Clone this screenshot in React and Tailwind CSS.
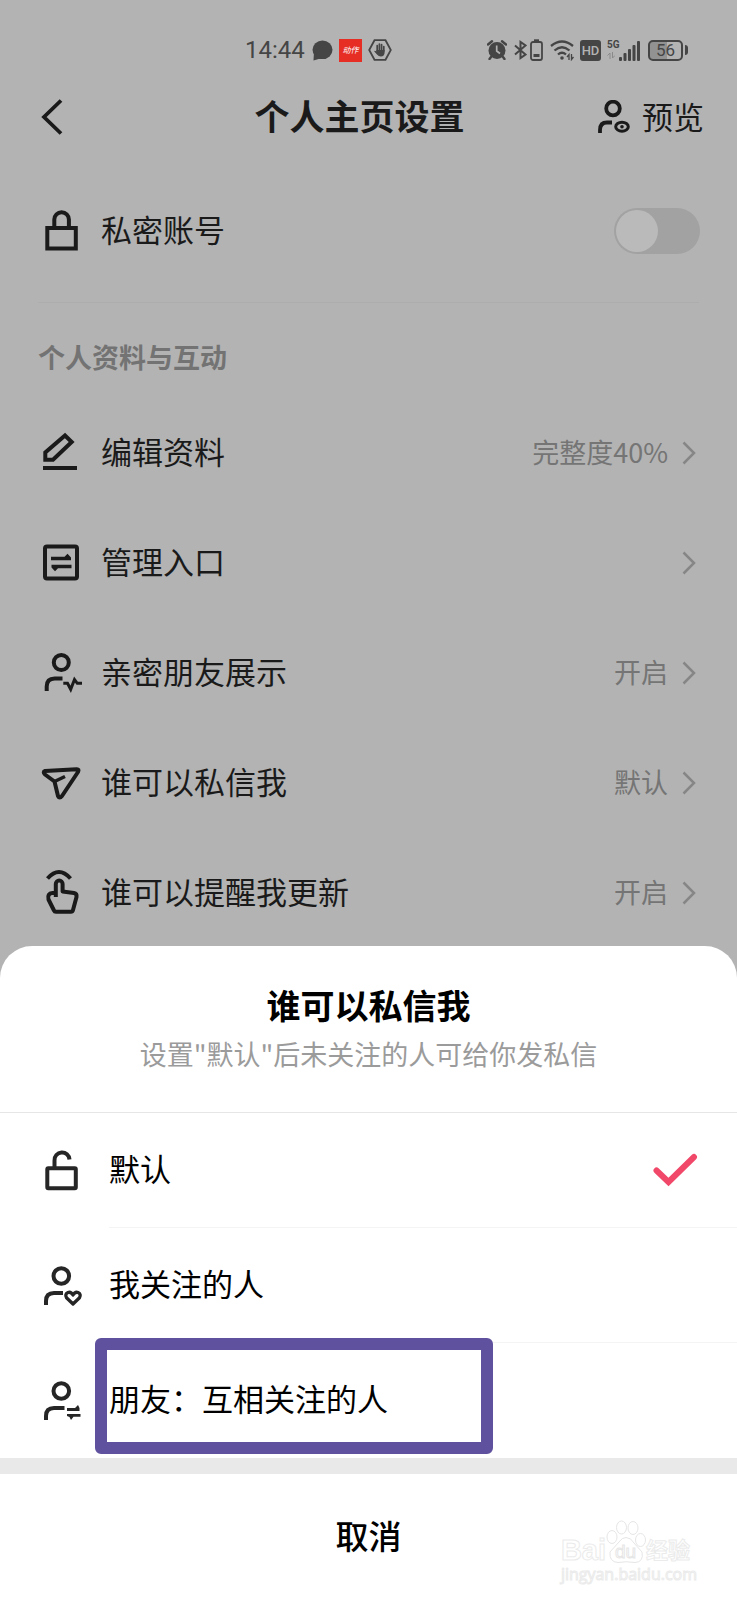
import { useState } from 'react';

function Icon({ children }) {
    return (
        <svg
            viewBox="0 0 40 40"
            className="h-10 w-10 shrink-0 overflow-visible"
            fill="none"
            stroke="currentColor"
            strokeWidth="4"
            aria-hidden="true"
        >
            {children}
        </svg>
    );
}

function LockIcon() {
    return (
        <Icon>
            <rect x="6.3" y="17" width="28.5" height="20.5" />
            <path d="M13.3 17V8.5a7.3 7.3 0 0 1 14.6 0V17" />
        </Icon>
    );
}

function UnlockIcon() {
    return (
        <Icon>
            <rect x="6.3" y="17.3" width="28.5" height="20" rx="1" />
            <path d="M13.5 17v-7.500a7.500 7.500 0 0 1 15-1" />
        </Icon>
    );
}

function EditIcon() {
    return (
        <Icon>
            <path d="M4.300 26.700V19.500L24 2.500L30.700 9L12 26.700Z" />
            <path d="M2 35H36" />
        </Icon>
    );
}

function ManageIcon() {
    return (
        <Icon>
            <rect x="4" y="3.500" width="32" height="32" rx="2" />
            <path d="M10 13.700H23.500L26.500 10.800L30 14.500V17.300H10Z" fill="currentColor" stroke="none" />
            <path d="M30.500 25.200H17L14 28.200L10.500 24.500V21.700H30.500Z" fill="currentColor" stroke="none" />
        </Icon>
    );
}

function FriendIcon() {
    return (
        <Icon>
            <circle cx="20.300" cy="9.500" r="7.500" />
            <path d="M5.700 38V33.500Q5.700 25.500 13.700 25.500H21.500" />
            <path d="M22.300 30.300H26.500L29.700 36.300L33.500 26.500L36.300 30.300H41" strokeWidth="3" />
        </Icon>
    );
}

function SendIcon() {
    return (
        <Icon>
            <path
                d="M4 8L35.500 6.200Q38.500 6 37 9L21 33Q18.500 36 17 33L13.500 18.500L4 11.500Q1.500 8.800 4 8Z"
                strokeLinejoin="round"
            />
            <path d="M13.500 18.500L24 13.500" strokeWidth="3.500" />
        </Icon>
    );
}

function TapIcon() {
    return (
        <Icon>
            <path d="M6.500 5.500Q18 -7.500 29.500 5.500" />
            <path
                d="M14.800 24V11a3.400 3.400 0 0 1 6.800 0V18.500L33 20Q36 20.500 35.500 24L32 37Q31.500 38.800 30 38.800H15Q13.500 38.800 13 37.500L7.500 26.500Q6 20.500 11.500 20H14.800"
                strokeLinejoin="round"
            />
        </Icon>
    );
}

function FollowIcon() {
    return (
        <Icon>
            <circle cx="20.300" cy="10" r="7.800" />
            <path d="M5 39V35Q5 27 13 27H22" />
            <path
                d="M32 38L25.500 31.800Q23.500 28 27 26.500Q30 25.500 32 29Q34 25.500 37 26.500Q40.500 28 38.500 31.800Z"
                strokeWidth="3.300"
                strokeLinejoin="round"
            />
        </Icon>
    );
}

function MutualIcon() {
    return (
        <Icon>
            <circle cx="20.300" cy="10" r="7.800" />
            <path d="M5 39V35Q5 27 13 27H23.500" />
            <path d="M26 27H34L37 24L38.500 27V30H26Z" fill="currentColor" stroke="none" />
            <path d="M39.500 35.800H32.500L30 39L28.500 36L26 35V33H39.500Z" fill="currentColor" stroke="none" />
        </Icon>
    );
}

function Chevron() {
    return (
        <svg viewBox="0 0 14 24" className="h-6 w-3.5 shrink-0 text-[#868686]" fill="none" stroke="currentColor" strokeWidth="2.500" aria-hidden="true">
            <path d="M1.500 1.500L12 12L1.500 22.500" />
        </svg>
    );
}

function StatusBar() {
    return (
        <div className="flex h-[100px] items-center pr-[49px] pl-[245px] text-[#454545]">
            <span className="w-[67px] font-[Roboto,sans-serif] text-2xl leading-6">14:44</span>
            <svg viewBox="0 0 21 21" className="h-[21px] w-[21px]" fill="currentColor" aria-hidden="true">
                <ellipse cx="10.500" cy="9.800" rx="10" ry="9.300" />
                <path d="M2 12L1.500 20.500L10 18Z" />
            </svg>
            <span className="ml-1.5 flex h-[23px] w-[23px] items-center justify-center bg-[#e62e25] text-[8px] leading-none text-white italic">
                动作
            </span>
            <svg viewBox="0 0 24 22" className="ml-1.5 h-[22px] w-6" fill="none" stroke="currentColor" aria-hidden="true">
                <path d="M6.500 1.200H17.500L22.800 11L17.500 20.800H6.500L1.200 11Z" strokeWidth="1.800" />
                <path d="M9.200 12V6.500M11.400 11V5M13.600 11V5.500M15.800 12V7.500" strokeWidth="1.700" strokeLinecap="round" />
                <path d="M8.400 11H16.600V14Q16 17.500 13 17.500Q10.500 17.500 9 15.500L6.300 12.500Q6.300 11 8.400 12.500Z" fill="currentColor" stroke="none" />
            </svg>

            <div className="ml-auto flex items-center">
                <svg viewBox="0 0 20 20" className="h-5 w-5" fill="none" stroke="currentColor" aria-hidden="true">
                    <circle cx="10" cy="10.500" r="8.500" fill="currentColor" stroke="none" />
                    <path d="M1 4.500L5 1.300M19 4.500L15 1.300M4 17L2.500 19M16 17L17.500 19" strokeWidth="2.400" strokeLinecap="round" />
                    <path d="M9.700 5.500V11L13 13.500" stroke="#b3b3b3" strokeWidth="1.700" />
                </svg>
                <svg viewBox="0 0 13 20" className="ml-[7px] h-5 w-[13px]" fill="none" stroke="currentColor" strokeWidth="2" aria-hidden="true">
                    <path d="M1 5.500L11.500 14.500L6.500 18V2L11.500 5.500L1 14.500" />
                </svg>
                <svg viewBox="0 0 13 22" className="ml-[3px] h-[22px] w-[13px]" fill="none" stroke="currentColor" strokeWidth="1.800" aria-hidden="true">
                    <rect x="1" y="3" width="11" height="18" rx="2" />
                    <path d="M4 1.200H9" />
                    <path d="M3.500 16.500H9.500" strokeWidth="3" />
                </svg>
                <svg viewBox="0 0 25 21" className="ml-[7px] h-[21px] w-[25px]" fill="none" stroke="currentColor" strokeWidth="2.300" aria-hidden="true">
                    <path d="M1 6Q12 -3 23 6M4.500 10.500Q12 4 19.500 10.500M8 14.500Q12 11 16 14.500" />
                    <circle cx="12" cy="18" r="1.800" fill="currentColor" stroke="none" />
                    <path d="M19 20V14.500L17 17M21.500 14V19.500L23.500 17" strokeWidth="1.300" />
                </svg>
                <span className="ml-[5px] flex h-[21px] w-[21px] items-center justify-center rounded-[3px] bg-current">
                    <span className="font-[Roboto,sans-serif] text-[13px] leading-none font-medium text-[#b3b3b3]">HD</span>
                </span>
                <div className="ml-1.5 flex h-[21px] items-end">
                    <span className="flex h-full w-3 flex-col items-start font-[Roboto,sans-serif] text-[10px] leading-[10px] font-bold">
                        5G
                        <svg viewBox="0 0 8 7" className="mt-0.5 h-[7px] w-2 text-[#8a8a8a]" fill="none" stroke="currentColor" aria-hidden="true">
                            <path d="M3 7V1L0.500 3.500M5.500 0V6L8 3.500" />
                        </svg>
                    </span>
                    <svg viewBox="0 0 22 21" className="h-[21px] w-[22px]" fill="currentColor" aria-hidden="true">
                        <rect x="0" y="17" width="3" height="4" rx="1" />
                        <rect x="4.500" y="13" width="3" height="8" rx="1" />
                        <rect x="9" y="9" width="3" height="12" rx="1" />
                        <rect x="13.500" y="5" width="3" height="16" rx="1" />
                        <rect x="18" y="1" width="3" height="20" rx="1" />
                    </svg>
                </div>
                <span className="ml-[7px] flex h-[21px] w-[35px] items-center justify-center rounded-[5px] border-2 border-current bg-linear-to-r from-[#929292] from-55% to-[#b3b3b3] to-55% font-[Roboto,sans-serif] text-[17px] leading-none">
                    56
                </span>
                <span className="ml-0.5 h-2.5 w-[3px] rounded-r-sm bg-current" />
            </div>
        </div>
    );
}

function Header() {
    return (
        <header className="flex h-[34px] items-center pr-[33px] pl-[41px]">
            <button type="button" aria-label="返回" className="w-20">
                <svg viewBox="0 0 24 36" className="h-9 w-6" fill="none" stroke="currentColor" strokeWidth="3.800" aria-hidden="true">
                    <path d="M20 1.500L3 18L20 34.500" />
                </svg>
            </button>
            <h1 className="flex-1 pb-1 text-center text-[35px] leading-[34px] font-bold">个人主页设置</h1>
            <button type="button" className="flex items-center gap-2.5 text-[31px] leading-[34px]">
                <svg viewBox="0 0 34 34" className="h-[34px] w-[34px]" fill="none" stroke="currentColor" strokeWidth="3.800" aria-hidden="true">
                    <circle cx="15" cy="8.500" r="6.800" />
                    <path d="M2 33V30Q2 22.500 9 22.500H14" />
                    <ellipse cx="24" cy="26.700" rx="6.300" ry="4.500" strokeWidth="3" />
                    <circle cx="24" cy="26.700" r="1.800" fill="currentColor" stroke="none" />
                </svg>
                <span className="pb-0.5">预览</span>
            </button>
        </header>
    );
}

const settings = [
    { icon: EditIcon, title: '编辑资料', value: '完整度40%' },
    { icon: ManageIcon, title: '管理入口' },
    { icon: FriendIcon, title: '亲密朋友展示', value: '开启' },
    { icon: SendIcon, title: '谁可以私信我', value: '默认' },
    { icon: TapIcon, title: '谁可以提醒我更新', value: '开启' },
];

function SettingRow({ icon: RowIcon, title, value }) {
    return (
        <button type="button" className="flex h-[110px] w-full items-center pr-[41px] pl-[41px] text-left">
            <RowIcon />
            <span className="ml-5 flex-1 pb-1 text-[31px] leading-10">{title}</span>
            <span className="mr-3.5 pb-0.5 text-[27px] leading-10 text-[#757575]">{value}</span>
            <Chevron />
        </button>
    );
}

const options = [
    { id: 'default', icon: UnlockIcon, title: '默认' },
    { id: 'following', icon: FollowIcon, title: '我关注的人' },
    { id: 'friends', icon: MutualIcon, title: '朋友：互相关注的人', marked: true },
];

function OptionRow({ option, checked, onSelect }) {
    const OptionIcon = option.icon;

    return (
        <label className="group relative flex h-[115px] items-stretch pl-[41px]">
            <span className="flex items-center text-[#262626]">
                <OptionIcon />
            </span>
            <input
                type="radio"
                name="message-permission"
                className="sr-only"
                checked={checked}
                onChange={() => onSelect(option.id)}
            />
            <span className="ml-7 flex flex-1 items-center border-b border-[#f4f4f4] pr-[39px] text-[31px] leading-10 group-last:border-transparent">
                <span className="flex-1 pb-1">{option.title}</span>
                {checked && (
                    <svg viewBox="0 0 46 36" className="h-9 w-[46px] text-[#f1486a]" fill="none" stroke="currentColor" strokeWidth="6" aria-hidden="true">
                        <path d="M4.500 18.500L16.500 30L42 5" strokeLinecap="round" />
                    </svg>
                )}
            </span>
            {option.marked && (
                <span className="absolute top-[-5px] left-[95px] h-[116px] w-[398px] rounded-md border-12 border-[#5f519e]" />
            )}
        </label>
    );
}

function Watermark() {
    return (
        <div className="absolute right-10 bottom-4 text-white [-webkit-text-stroke:1px_#ebebeb]" aria-hidden="true">
            <div className="flex items-end">
                <span className="font-['Liberation_Sans',sans-serif] text-[29px] leading-7 font-bold">Bai</span>
                <svg viewBox="0 0 40 44" className="h-11 w-10" fill="#fff" stroke="#e6e6e6">
                    <ellipse cx="6" cy="17" rx="5" ry="6.500" />
                    <ellipse cx="15.500" cy="7.500" rx="5" ry="6.500" />
                    <ellipse cx="27" cy="8" rx="5" ry="6.500" />
                    <ellipse cx="34.500" cy="20" rx="5" ry="6.500" />
                    <path d="M20 17.500Q25 17.500 28 23L36 32Q38 42 29 42.500Q20 41 12 42.500Q3 42 4 32L13 22Q16 17.500 20 17.500Z" />
                    <text x="9" y="38" fontFamily="Liberation Sans, sans-serif" fontSize="19">du</text>
                </svg>
                <span className="text-[22px] leading-8 font-bold">经验</span>
            </div>
            <div className="font-['Open_Sans',sans-serif] text-base leading-5">jingyan.baidu.com</div>
        </div>
    );
}

export default function App() {
    const [isPrivate, setIsPrivate] = useState(false);
    const [selected, setSelected] = useState('default');

    return (
        <div className="flex min-h-screen flex-col bg-[#b3b3b3] font-['Noto_Sans_CJK_SC',sans-serif] text-[#1a1a1a]">
            <StatusBar />
            <Header />

            <main className="shrink-0">
                <label className="mt-[42px] flex h-[110px] items-center pr-[37px] pl-[41px]">
                    <LockIcon />
                    <span className="ml-5 flex-1 pb-1 text-[31px] leading-10">私密账号</span>
                    <input
                        type="checkbox"
                        role="switch"
                        checked={isPrivate}
                        onChange={(e) => setIsPrivate(e.target.checked)}
                        className="flex h-[46px] w-[86px] appearance-none items-center rounded-full bg-[#a2a2a2] px-0.5 before:h-[42px] before:w-[42px] before:rounded-full before:bg-[#bababa] checked:justify-end"
                    />
                </label>
                <div className="mx-[38px] mt-4 border-t border-[#adadad]" />
                <h2 className="mt-[34px] mb-[21px] px-[38px] text-[27px] leading-10 font-bold text-[#737373]">个人资料与互动</h2>
                {settings.map((item) => (
                    <SettingRow key={item.title} {...item} />
                ))}
            </main>

            <section className="relative -mt-0.5 flex flex-1 flex-col rounded-t-[32px] bg-white text-black">
                <div className="border-b border-[#e6e6e6] pt-[34px] pb-[34px] text-center">
                    <h2 className="text-[34px] leading-[50px] font-bold">谁可以私信我</h2>
                    <p className="text-[27px] leading-[48px] text-[#9b9b9b]">设置"默认"后未关注的人可给你发私信</p>
                </div>
                <div>
                    {options.map((option) => (
                        <OptionRow key={option.id} option={option} checked={selected === option.id} onSelect={setSelected} />
                    ))}
                </div>
                <div className="h-4 bg-[#e9e9e9]" />
                <button type="button" className="flex-1 pb-1 text-[33px] leading-[48px] font-medium">
                    取消
                </button>
                <Watermark />
            </section>
        </div>
    );
}
